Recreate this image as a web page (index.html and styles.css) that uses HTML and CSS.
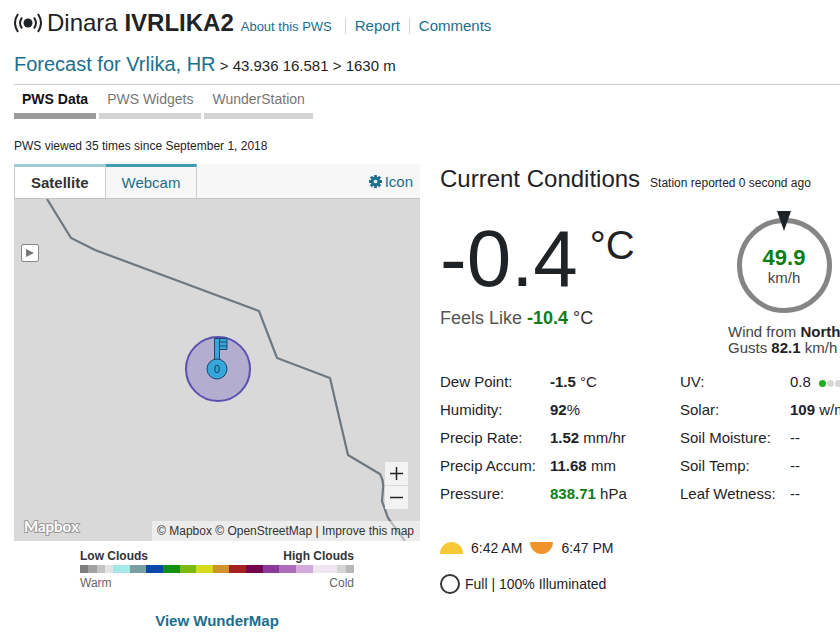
FILE: index.html
```html
<!DOCTYPE html>
<html lang="en">
<head>
    <meta charset="UTF-8">
    <meta name="viewport" content="width=device-width, initial-scale=1.0">
    <title>Dinara IVRLIKA2 - Personal Weather Station</title>
    <link rel="stylesheet" href="styles.css">
</head>
<body>
    <header>
        <div class="station">
            <svg class="signal" width="28" height="22" viewBox="0 0 28 22" fill="none" stroke="#1f2326" stroke-width="2">
                <circle cx="14" cy="11" r="4.500" fill="#1f2326" stroke="none"/>
                <path d="M8 5.500Q4 11 8 16.500M20 5.500Q24 11 20 16.500M4 2Q-2 11 4 20M24 2Q30 11 24 20"/>
            </svg>
            <h1>Dinara <strong>IVRLIKA2</strong></h1>
            <nav class="links">
                <a class="small" href="#about">About this PWS</a>
                <a href="#report">Report</a>
                <a href="#comments">Comments</a>
            </nav>
        </div>
        <div class="location"><a href="#forecast">Forecast for Vrlika, HR</a> &gt; 43.936 16.581 &gt; 1630 m</div>
        <nav class="tabs">
            <a class="active" href="#data">PWS Data</a>
            <a href="#widgets">PWS Widgets</a>
            <a href="#wunderstation">WunderStation</a>
        </nav>
        <p class="views">PWS viewed 35 times since September 1, 2018</p>
    </header>

    <main>
        <section class="map-panel">
            <div class="map-tabs">
                <button class="map-tab active">Satellite</button>
                <button class="map-tab">Webcam</button>
                <a class="icon-link" href="#icon">
                    <svg width="13" height="13" viewBox="0 0 14 14">
                        <g stroke="#1a6e8e" stroke-width="3">
                            <path d="M7 0V14M0 7H14M2 2L12 12M12 2L2 12"/>
                        </g>
                        <circle cx="7" cy="7" r="5" fill="#1a6e8e"/>
                        <circle cx="7" cy="7" r="2" fill="#f7f7f7"/>
                    </svg>
                    Icon
                </a>
            </div>
            <div class="map">
                <svg class="map-canvas" viewBox="0 0 406 342">
                    <path d="M33 0L57 39L81 51L245 112L263 159L316 179L334 256L366 275Q370 282 369 290L368 302L374 319L391 342" fill="none" stroke="#6d7780" stroke-width="2.200"/>
                    <circle cx="204" cy="170" r="32" fill="#a9a3cc" fill-opacity="0.800" stroke="#5a50b2" stroke-width="2"/>
                    <path d="M200.500 161V139.500H213V150.500H205.500V161" fill="#35a7dc" stroke="#1d4668" stroke-width="1"/>
                    <path d="M205 143H213M205 147H213M205.500 140V150" stroke="#1d4668" stroke-width="1"/>
                    <circle cx="203" cy="170" r="10" fill="#35a7dc" stroke="#1d4668" stroke-width="1"/>
                    <text class="pin-label" x="203" y="174" text-anchor="middle">0</text>
                </svg>
                <button class="play" aria-label="Play">
                    <svg width="10" height="10" viewBox="0 0 10 10"><path d="M1 1L9 5L1 9Z" fill="#777"/></svg>
                </button>
                <div class="zoom">
                    <button aria-label="Zoom in"><svg width="13" height="13" viewBox="0 0 13 13"><path d="M0 6.500H13M6.500 0V13" stroke="#222" stroke-width="1.500"/></svg></button>
                    <button aria-label="Zoom out"><svg width="13" height="13" viewBox="0 0 13 13"><path d="M0 6.500H13" stroke="#222" stroke-width="1.500"/></svg></button>
                </div>
                <span class="map-logo">Mapbox</span>
                <div class="attribution"><a href="#mapbox">© Mapbox</a> <a href="#osm">© OpenStreetMap</a> | <a href="#improve">Improve this map</a></div>
            </div>
            <div class="legend">
                <div class="legend-row"><strong>Low Clouds</strong><strong>High Clouds</strong></div>
                <div class="scale">
                    <i class="g1"></i><i class="g2"></i><i class="g3"></i><i class="g4"></i>
                    <i class="c1"></i><i class="c2"></i><i class="c3"></i><i class="c4"></i>
                    <i class="c5"></i><i class="c6"></i><i class="c7"></i><i class="c8"></i>
                    <i class="c9"></i><i class="c10"></i><i class="c11"></i><i class="c12"></i>
                    <i class="c13"></i><i class="g5"></i><i class="g6"></i>
                </div>
                <div class="legend-row"><span>Warm</span><span>Cold</span></div>
            </div>
            <a class="wundermap" href="#wundermap">View WunderMap</a>
        </section>

        <section class="conditions">
            <div class="heading">
                <h2>Current Conditions</h2>
                <span>Station reported 0 second ago</span>
            </div>
            <div class="current">
                <div class="temperature">
                    <div class="temp">-0.4<span>°C</span></div>
                    <div class="feels">Feels Like <b class="green">-10.4</b> <span>°C</span></div>
                </div>
                <div class="wind">
                    <div class="dial">
                        <svg class="needle" width="14" height="20" viewBox="0 0 14 20"><path d="M0 0H14L7 20Z" fill="#1f2326"/></svg>
                        <b class="green">49.9</b>
                        <span>km/h</span>
                    </div>
                    <div>Wind from <b>North</b></div>
                    <div>Gusts <b>82.1</b> km/h</div>
                </div>
            </div>
            <div class="readings">
                <table>
                    <tr><th>Dew Point:</th><td><b>-1.5</b> °C</td></tr>
                    <tr><th>Humidity:</th><td><b>92</b>%</td></tr>
                    <tr><th>Precip Rate:</th><td><b>1.52</b> mm/hr</td></tr>
                    <tr><th>Precip Accum:</th><td><b>11.68</b> mm</td></tr>
                    <tr><th>Pressure:</th><td><b class="green">838.71</b> hPa</td></tr>
                </table>
                <table>
                    <tr><th>UV:</th><td>0.8 <span class="uv"><i class="on"></i><i></i><i></i><i></i><i></i></span></td></tr>
                    <tr><th>Solar:</th><td><b>109</b> w/m²</td></tr>
                    <tr><th>Soil Moisture:</th><td>--</td></tr>
                    <tr><th>Soil Temp:</th><td>--</td></tr>
                    <tr><th>Leaf Wetness:</th><td>--</td></tr>
                </table>
            </div>
            <div class="sun">
                <svg width="23" height="12" viewBox="0 0 23 12"><path d="M0 12A11.500 12 0 0 1 23 12Z" fill="#f7c934"/></svg>
                <span>6:42 AM</span>
                <svg width="23" height="12" viewBox="0 0 23 12"><path d="M0 0A11.500 12 0 0 0 23 0Z" fill="#f0932b"/></svg>
                <span>6:47 PM</span>
            </div>
            <div class="moon">
                <svg width="20" height="20" viewBox="0 0 20 20"><circle cx="10" cy="10" r="9" fill="#fff" stroke="#33373a" stroke-width="2"/></svg>
                <span>Full | 100% Illuminated</span>
            </div>
        </section>
    </main>
</body>
</html>
```
FILE: styles.css
```css
body {
    font-family: "Liberation Sans", Arial, sans-serif;
    font-size: 15px;
    color: #1f2326;
    background-color: #fff;
    margin: 0;
    padding: 8px 0 0 14px;
    box-sizing: border-box;
    overflow: hidden;
}
a {
    color: #1a6e8e;
    text-decoration: none;
}
a:hover {
    text-decoration: underline;
}
button {
    font-family: inherit;
    cursor: pointer;
}
svg {
    flex: none;
}
.green {
    color: #0f7d12;
}

/* header */
.station {
    display: flex;
    align-items: baseline;
    line-height: 30px;
}
.signal {
    align-self: center;
    margin-right: 5px;
}
h1 {
    font-size: 24px;
    font-weight: normal;
    margin: 0 7px 0 0;
}
.links {
    display: flex;
    align-items: baseline;
    line-height: 16px;
}
.links a + a {
    margin-left: 9px;
    padding-left: 9px;
    border-left: 1px solid #d5d5d5;
}
.links .small {
    font-size: 13px;
    margin-right: 4px;
}
.location {
    padding: 13px 0 5px;
    line-height: 26px;
    border-bottom: 1px solid #ccc;
}
.location a {
    font-size: 20px;
}
.tabs {
    display: flex;
    gap: 3px;
}
.tabs a {
    font-size: 14px;
    line-height: 28px;
    padding: 0 8px;
    color: #777;
    border-bottom: 6px solid #d3d3d3;
}
.tabs .active {
    color: #111;
    font-weight: bold;
    border-bottom-color: #9c9c9c;
}
.views {
    font-size: 12px;
    line-height: 16px;
    margin: 19px 0 10px;
}

main {
    display: grid;
    grid-template-columns: 406fr 400fr;
    gap: 20px;
    align-items: start;
}
.map-panel,
.conditions {
    min-width: 0;
}

/* map */
.map-panel {
    display: flex;
    flex-direction: column;
}
.map-tabs {
    display: flex;
    background: #f7f7f7;
    border-bottom: 1px solid #c4c4c4;
}
.map-tab {
    height: 34px;
    padding: 0 16px;
    font-size: 15px;
    color: #1a6e8e;
    background: #f7f7f7;
    border: 0;
    border-top: 3px solid #3e9cb0;
    border-right: 1px solid #ccc;
}
.map-tab.active {
    font-weight: bold;
    color: #333;
    background: #fff;
    border-top-color: #9fcbd4;
    border-left: 1px solid #ccc;
}
.icon-link {
    display: flex;
    align-items: center;
    gap: 3px;
    margin-left: auto;
    padding-right: 7px;
}
.map {
    position: relative;
    background: #d9d9d9;
}
.map-canvas {
    display: block;
    width: 100%;
}
.pin-label {
    font-size: 11px;
    fill: #173a5a;
}
.play {
    position: absolute;
    left: 7px;
    top: 45px;
    width: 18px;
    height: 18px;
    padding: 0;
    display: flex;
    align-items: center;
    justify-content: center;
    background: #fff;
    border: 1px solid #888;
    border-radius: 2px;
}
.zoom {
    position: absolute;
    right: 12px;
    bottom: 32px;
    display: grid;
    gap: 1px;
}
.zoom button {
    width: 23px;
    height: 23px;
    padding: 0;
    display: flex;
    align-items: center;
    justify-content: center;
    background: #f3f3f3;
    border: 0;
}
.map-logo {
    position: absolute;
    left: 10px;
    bottom: 5px;
    font-family: Lato, sans-serif;
    font-size: 15px;
    font-weight: bold;
    line-height: 20px;
    color: #fff;
    -webkit-text-stroke: 2px #999;
    paint-order: stroke fill;
}
.attribution {
    position: absolute;
    right: 0;
    bottom: 0;
    padding: 0 6px 0 5px;
    font-size: 12px;
    line-height: 20px;
    background: rgba(255, 255, 255, 0.5);
}
.attribution a {
    color: #333;
}
.legend {
    width: 274px;
    margin: 7px auto 0;
    font-size: 12px;
    line-height: 16px;
    color: #666;
}
.legend strong {
    color: #333;
}
.legend-row {
    display: flex;
    justify-content: space-between;
}
.scale {
    display: flex;
    height: 8px;
    margin: 1px 0 2px;
}
.scale i {
    flex: 2;
}
.scale .g1 { flex: 1; background: #7f7f7f; }
.scale .g2 { flex: 1; background: #a0a0a0; }
.scale .g3 { flex: 1; background: #c4c4c4; }
.scale .g4 { flex: 1; background: #e3e3e3; }
.c1 { background: #a5e8e8; }
.c2 { background: #7b9ea3; }
.c3 { background: #0848ab; }
.c4 { background: #15900c; }
.c5 { background: #7cb913; }
.c6 { background: #d5dc1c; }
.c7 { background: #d0952a; }
.c8 { background: #a42222; }
.c9 { background: #74064f; }
.c10 { background: #8b3a9c; }
.c11 { background: #ae6cbc; }
.c12 { background: #d3aadb; }
.scale .c13 { flex: 3; background: #f0e6f1; }
.scale .g5 { flex: 1; background: #d4d4d4; }
.scale .g6 { flex: 1; background: #b8b8b8; }
.wundermap {
    align-self: center;
    margin-top: 20px;
    font-weight: bold;
    line-height: 20px;
}

/* current conditions */
.conditions {
    white-space: nowrap;
}
.heading {
    display: flex;
    align-items: baseline;
    gap: 10px;
    line-height: 30px;
}
.heading h2 {
    font-size: 24px;
    font-weight: normal;
    margin: 0;
}
.heading span {
    font-size: 12px;
}
.current {
    display: flex;
    justify-content: space-between;
    margin-top: 13px;
}
.temp {
    display: flex;
    gap: 12px;
    margin-top: 8px;
    font-size: 80px;
    line-height: 80px;
}
.temp span {
    font-size: 40px;
    line-height: 52px;
}
.feels {
    margin-top: 8px;
    font-size: 18px;
    line-height: 22px;
    color: #555;
}
.feels span {
    color: #333;
}
.wind {
    width: 112px;
    line-height: 16px;
    color: #444;
}
.wind > div > b:not(.green) {
    color: #1f2326;
}
.dial {
    position: relative;
    display: flex;
    flex-direction: column;
    align-items: center;
    justify-content: center;
    width: 95px;
    height: 95px;
    margin: 7px auto 11px;
    border: 5px solid #858585;
    border-radius: 50%;
    box-sizing: border-box;
}
.dial .needle {
    position: absolute;
    top: -12px;
}
.dial b {
    font-size: 22px;
    line-height: 24px;
}
.readings {
    display: flex;
    margin-top: 12px;
}
.readings table {
    flex: none;
    width: 240px;
    border-collapse: collapse;
    table-layout: fixed;
}
.readings th,
.readings td {
    padding: 0;
    line-height: 28px;
    font-weight: normal;
    text-align: left;
}
.readings th {
    width: 110px;
}
.uv {
    display: inline-flex;
    gap: 1px;
    margin-left: 4px;
}
.uv i {
    width: 7px;
    height: 7px;
    border-radius: 50%;
    background: #d8d8d8;
}
.uv .on {
    background: #1fae1f;
}
.sun {
    display: flex;
    align-items: center;
    gap: 8px;
    margin-top: 30px;
    font-size: 14px;
    line-height: 20px;
}
.moon {
    display: flex;
    align-items: center;
    gap: 5px;
    margin-top: 16px;
    font-size: 14px;
    line-height: 20px;
}
```
